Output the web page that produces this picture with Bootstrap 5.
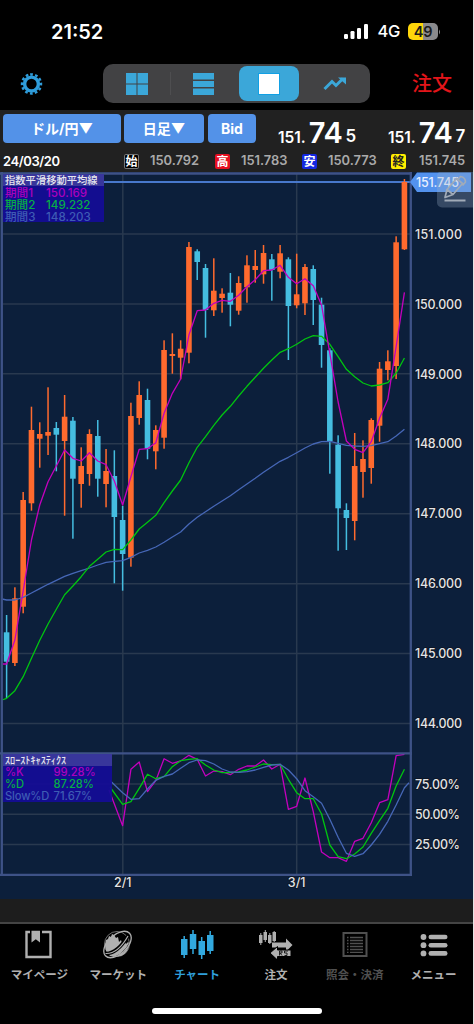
<!DOCTYPE html>
<html lang="ja">
<head>
<meta charset="utf-8">
<meta name="viewport" content="width=device-width, initial-scale=1">
<title>チャート</title>
<link rel="stylesheet" href="https://cdn.jsdelivr.net/npm/bootstrap@5.3.0/dist/css/bootstrap.min.css">
<style>
html,body{height:1024px;overflow:hidden;background:#000}
body{font-family:Inter,"Noto Sans CJK JP",sans-serif;color:#fff;line-height:1}
.phone{width:474px;height:1024px;border-right:1px solid #e4e4e4;overflow:hidden}
.phone svg{display:block;flex:none}
.status{height:64px;padding:22px 32px 0 51px}
.clock{font-size:20px;font-weight:600;letter-spacing:0;line-height:20px}
.net{font-size:16.5px;font-weight:500;letter-spacing:-.3px}
.battery{width:30px;height:17px;border-radius:5px;background:linear-gradient(90deg,#ffd60a 50%,#8a8a8d 50%);color:#1a1a1a;font-size:14.5px;font-weight:600;letter-spacing:-.2px;padding-top:1px}
.toolbar{height:39px;padding:0 20px}
.seg{width:267px;height:39px;border-radius:10px;background:#424244;padding:2px;margin-left:60px}
.seg .cell{width:66px}
.seg .cell:first-child{border-right:1px solid #4b4b4d;border-image:linear-gradient(transparent 20%,#4e4e50 20% 80%,transparent 80%) 1}
.seg .on{background:#3ba7d9;border-radius:8px;width:61px;margin:0 3px 0 2px}
.order{color:#e3151a;font-size:20px;font-weight:500;width:41px;white-space:nowrap}
.quote{height:62px;margin-top:7px;background:#212121;padding-top:4px}
.pick{height:29px;background:#5392e8;border-radius:4px;color:#fff;font-weight:700;font-size:14px;padding:0;border:0;line-height:30px;white-space:nowrap}
.rate{font-weight:600;width:80px;height:31px;white-space:nowrap}
.rate .pre{font-size:15.5px}.rate .big{font-size:29px;letter-spacing:-.3px;line-height:25px;margin-left:3px}.rate .pip{font-size:17px;margin-left:3px}
.ohlc{display:grid;grid-template-columns:120px 26px 65px 26px 61px 26px 63px 28px 55px;height:28px;align-items:center;font-size:12.9px;font-weight:600;color:#aaa;padding-top:5px}
.ohlc .day{font-size:13px;letter-spacing:-.4px;font-weight:600;padding-left:3px}
.tag{width:15px;height:15px;border-radius:2px;font-size:12px;font-weight:700;line-height:15px;text-align:center;overflow:hidden}
.chart{height:727px;background:#0c1f3b}
.axis text{fill:#e2e3e6;font:500 12.5px Inter,sans-serif;stroke:#0c1320;stroke-width:1.5px;paint-order:stroke}
.legend-box{position:absolute;left:3px;background:rgba(20,12,151,.93);font-size:11.6px;line-height:12px;white-space:nowrap;font-weight:500}
.legend-box .cap{background:#38369b;color:#e6e6ee;padding-left:2px;margin-bottom:1px}
.legend-box .ln{height:12px;padding-left:2px}
.legend-box .kanji{font-size:11.2px;letter-spacing:.2px}
.c1{color:#aa00bd}.c2{color:#06af46}.c3{color:#3e5cb4}
.gap-bar{height:25px;background:#1d1d1d;border-bottom:2px solid #444}
.tabs{height:100px;padding-top:5px}
.tab-item{width:79px;color:#b0b0b0;font-size:11.5px;font-weight:600;white-space:nowrap}
.tab-item .cap{margin-top:9px;line-height:14px}
.home{width:170px;height:6px;border-radius:3px;background:#fff;margin:auto auto 10px 152px}
</style>
<script src="https://cdn.jsdelivr.net/npm/bootstrap@5.3.0/dist/js/bootstrap.bundle.min.js"></script>
</head>
<body>
<main class="phone d-flex flex-column">
 <header class="status d-flex justify-content-between align-items-start">
  <span class="clock">21:52</span>
  <div class="d-flex align-items-center" style="height:19px">
   <svg width="25" height="17" viewBox="0 0 25 17" fill="#fff"><rect x="0" y="11" width="4" height="5" rx="1.2"/><rect x="6.500" y="8" width="4" height="8" rx="1.200"/><rect x="13" y="5" width="4" height="11" rx="1.200"/><rect x="20" y="1" width="4" height="15" rx="1.200"/></svg>
   <span class="net ms-2 me-2">4G</span>
   <span class="battery d-flex align-items-center justify-content-center">49</span>
   <svg width="3" height="6"><path d="M1 .5Q3 3 1 5.500z" fill="#8a8a8d"/></svg>
  </div>
 </header>
 <nav class="toolbar d-flex align-items-center">
  <svg width="23" height="24" viewBox="-12 -12 24 24"><circle r="7.200" fill="none" stroke="#2f9ddb" stroke-width="3.600"/><circle r="9.900" fill="none" stroke="#2f9ddb" stroke-width="2.600" stroke-dasharray="2.800 2.384" transform="rotate(-98)"/></svg>
  <div class="seg d-flex align-items-stretch">
   <div class="cell d-flex align-items-center justify-content-center"><svg width="22" height="22" fill="#3ba7d9"><path d="M0 0h10.500v10.500H0zM11.500 0H22v10.500H11.500zM0 11.500h10.500V22H0zM11.500 11.500H22V22H11.500z"/></svg></div>
   <div class="cell d-flex align-items-center justify-content-center"><svg width="22" height="22" fill="#3ba7d9"><path d="M0 0h21v6.500H0zM0 8h21v6H0zM0 15.500h21V22H0z"/></svg></div>
   <div class="cell on d-flex align-items-center justify-content-center"><svg width="22" height="22"><rect x=".5" y=".5" width="21" height="21" fill="#fff" stroke="#12a0e4"/></svg></div>
   <div class="cell d-flex align-items-center justify-content-center"><svg width="24" height="16" viewBox="0 0 24 16" fill="none" stroke="#3ba7d9" stroke-width="3"><path d="M1.500 13 9 5.500l4 4 7-7"/><path d="M15 1.500h8v7z" fill="#3ba7d9" stroke="none"/></svg></div>
  </div>
  <span class="order ms-auto">注文</span>
 </nav>
 <section class="quote">
  <div class="d-flex">
   <button class="pick" style="width:118px;margin-left:3px">ドル/円▼</button>
   <button class="pick" style="width:80px;margin-left:3px">日足▼</button>
   <button class="pick" style="width:48px;margin-left:4px">Bid</button>
   <div class="rate d-flex align-items-end" style="margin-left:22px"><span class="pre">151.</span><span class="big">74</span><span class="pip">5</span></div>
   <div class="rate d-flex align-items-end" style="margin-left:30px"><span class="pre">151.</span><span class="big">74</span><span class="pip">7</span></div>
  </div>
  <div class="ohlc">
   <span class="text-white day">24/03/20</span>
   <span class="ps-1"><i class="tag d-block fst-normal" style="background:#000;box-shadow:0 0 0 1px #777 inset;color:#fff">始</i></span><span class="ps-1">150.792</span>
   <span class="ps-1"><i class="tag d-block fst-normal" style="background:#e60f20;color:#fff">高</i></span><span class="ps-1">151.783</span>
   <span class="ps-1"><i class="tag d-block fst-normal" style="background:#1428e0;color:#fff">安</i></span><span class="ps-1">150.773</span>
   <span class="ps-1"><i class="tag d-block fst-normal" style="background:#ffee00;color:#222">終</i></span><span class="ps-1">151.745</span>
  </div>
 </section>
 <section class="chart position-relative">
  <svg id="plot" width="473" height="727" viewBox="0 172 473 727">
   <g id="grid" stroke="#29394f" stroke-width="1.500"></g>
   <path d="M100 182H411" stroke="#4878cc" stroke-width="2"/>
   <g id="candles"></g><g id="lines" fill="none" stroke-width="1.300" stroke-linejoin="round"></g>
   <path d="M1.800 172V875M410.800 172V876M0 173.500H412M0 753.300H412M0 874.800H412" fill="none" stroke="#3e5287" stroke-width="2.300"/>
   <g id="axis" class="axis"></g>
   <path d="M410 182l7-9.500h54v19.500h-54z" fill="#5392ee"/>
   <text x="416" y="186.500" fill="#e9efff" font-family="Inter,sans-serif" font-size="12.500" font-weight="500" textLength="43">151.745</text>
   <path d="M442 171h31v36.500h-31a5 5 0 0 1-5-5V176a5 5 0 0 1 5-5z" fill="#99abc4" fill-opacity=".3"/>
   <g fill="none" stroke="#a1abb8" stroke-width="1.700" stroke-linejoin="round"><path d="M445 197.500l2-8 9.500-11 6 5-9.500 11zM447 189.500l6 5M458.500 179l2-2.500q5 1 5 5.500l-3 3.500"/><path d="M444.500 200.500h21" stroke-width="2"/></g>
  </svg>
  <div class="legend-box" style="top:2px;width:101px;height:48px">
   <div class="cap" style="font-size:10.300px">指数平滑移動平均線</div>
   <div class="ln c1 d-flex"><span style="width:41px">期間1</span>150.169</div>
   <div class="ln c2 d-flex"><span style="width:41px">期間2</span>149.232</div>
   <div class="ln c3 d-flex"><span style="width:41px">期間3</span>148.203</div>
  </div>
  <div class="legend-box" style="top:582px;width:109px;height:48px;font-size:11.2px">
   <div class="cap" style="font-size:10.200px;margin-bottom:0">ｽﾛｰｽﾄｷｬｽﾃｨｸｽ</div>
   <div class="ln c1 d-flex"><span style="width:48.500px">%K</span>99.28%</div>
   <div class="ln c2 d-flex"><span style="width:48.500px">%D</span>87.28%</div>
   <div class="ln c3 d-flex"><span style="width:48.500px;letter-spacing:-.15px">Slow%D</span>71.67%</div>
  </div>
 </section>
 <div class="gap-bar"></div>
 <nav class="tabs d-flex flex-column">
  <div class="d-flex">
   <div class="tab-item d-flex flex-column align-items-center"><svg width="28" height="30" viewBox="0 0 28 30"><path d="M1.500 3h24v25h-24z" fill="none" stroke="#b0b0b0" stroke-width="2.400"/><path d="M5 0h12v5H5z" fill="#000"/><path d="M6.500 1.800h8.500v11.700l-4.200-3.200-4.300 3.200z" fill="#b0b0b0"/></svg><span class="cap">マイページ</span></div>
   <div class="tab-item d-flex flex-column align-items-center"><svg width="32" height="30" viewBox="0 0 32 30"><circle cx="15" cy="15" r="12.500" fill="none" stroke="#8a8a8a" stroke-width=".8"/><path d="M3 16l1-5 2-1 1-3 2 1 1-3 2 1 2 3 2-1 1 5 2-2 1 3 3-1 1 2 2-2 1 1-3 5-6 6-6 3-4-1-4-5z" fill="#b0b0b0"/><path d="M3.500 24.500Q15 25 26 7" fill="none" stroke="#000" stroke-width="3.600"/><ellipse cx="15.500" cy="15.500" rx="16.500" ry="9.500" transform="rotate(-43 15.500 15.500)" fill="none" stroke="#b0b0b0" stroke-width="1.300"/><path d="M3.500 24.500Q16 25 26 7" fill="none" stroke="#b0b0b0" stroke-width="1.200"/><path d="M15 27.500q9 0 12-10l-5 5.500z" fill="#b0b0b0"/></svg><span class="cap">マーケット</span></div>
   <div class="tab-item d-flex flex-column align-items-center" style="color:#2f9fda"><svg width="34" height="30" viewBox="0 0 34 30" fill="#32a9df"><path d="M1 10h6.500v16H1zM9.800 5h6.500v15H9.800zM18.500 12h6.500v14h-6.500zM27 6h6.500v16H27z"/><path d="M4.200 7v22M13 1v24M21.700 8v22M30.200 2v23" stroke="#32a9df" stroke-width="1.500"/></svg><span class="cap">チャート</span></div>
   <div class="tab-item d-flex flex-column align-items-center"><svg width="34" height="30" viewBox="0 0 34 30" fill="#b0b0b0"><path d="M0 6h3.500v8H0zM4.500 3H8v8H4.500zM9 6h3.500v8H9zM13.500 3H17v9h-3.500z"/><path d="M1.800 4v12M6.300 1v12M10.800 4v11M15.200 2v11" stroke="#b0b0b0"/><path d="M13 13.500h14V9.500l6.500 6.500-6.500 6.500v-4H13z"/><path d="M18.500 17.500v3.500H32v6.500H18.500V31L11 24z" stroke="#000"/><path d="M20.500 26.500V22h2.500v2h-2l2 2.500M25.500 26.500H28V24h-2.500v-2H29" fill="none" stroke="#111" stroke-width=".9"/></svg><span class="cap">注文</span></div>
   <div class="tab-item d-flex flex-column align-items-center" style="color:#505050"><svg width="26" height="30" viewBox="0 0 26 30" fill="none" stroke="#505050"><path d="M1.500 4h23v23h-23z" stroke-width="2"/><path d="M5 8.500h1.500M5 11.500h1.500M5 14.500h1.500M5 17.500h1.500M5 20.500h1.500M5 23.300h1.500M8 8.500h13M8 11.500h13M8 14.500h13M8 17.500h13M8 20.500h13M8 23.300h13" stroke-width="1.300"/></svg><span class="cap">照会・決済</span></div>
   <div class="tab-item d-flex flex-column align-items-center"><svg width="28" height="30" viewBox="0 0 28 30" fill="#b0b0b0"><circle cx="3.500" cy="8" r="2.900"/><circle cx="3.500" cy="16.200" r="2.900"/><circle cx="3.500" cy="24.400" r="2.900"/><rect x="8.500" y="5.700" width="19" height="4.600" rx="2.300"/><rect x="8.500" y="13.900" width="19" height="4.600" rx="2.300"/><rect x="8.500" y="22.100" width="19" height="4.600" rx="2.300"/></svg><span class="cap">メニュー</span></div>
  </div>
  <div class="home"></div>
 </nav>
</main>
<script>
// Each candle: up/down flag, high, body top, body bottom, low
const candles=[[0,615,632.3,661.7,698],[1,587.3,598.3,663,666],[1,492,500,606.7,613.3],[1,406.7,430,503.3,510.7],[1,422.3,434,438.7,467.7],[1,387.3,432,435.7,455],[0,422,428,434.7,471.3],[1,395,416.7,441,515.7],[0,417,420.7,478.7,538.7],[1,447.3,466,484,507.7],[1,429.3,434,474,485.7],[0,420,436,478.7,496.7],[1,449,471,484,507.3],[0,450.3,476,517,583.3],[0,506,520,554,590.7],[1,402.7,416,557.7,566.7],[1,381.3,395,418,424.7],[0,388.7,400,448.7,459.3],[1,425.3,430,451.3,469.3],[1,340.3,350,437.7,448.7],[1,333.3,354,356,373.7],[1,340.3,348.7,357.7,379.3],[1,242,247,352.7,363.3],[0,249.3,251.3,262,280],[0,264,268,310,337.7],[1,258.3,290.7,310.3,316],[1,288.3,293.7,298,312.7],[0,273,292.7,304.7,326.3],[1,276.3,283,310.7,314.7],[1,255.3,265.3,287.3,302.7],[1,250,266,270,282.7],[1,245,253,274.3,283.7],[0,254,259.3,270,300.7],[1,245,253.3,271.7,278.3],[0,257.3,259.3,306,360],[1,253.7,294.3,305.3,308.3],[1,264,267,303.3,315],[0,265.3,269,300,325],[0,297.7,304.7,345,367.7],[0,348.3,350.3,441.3,473.7],[0,435.3,444.7,508.3,550.7],[0,503.3,510,518,550],[1,433,466,521,540.3],[1,440.3,459,472,497.7],[1,418.3,420,468,483.7],[1,362,368.7,425.7,441.7],[1,350.3,361.3,370,380.3],[1,236.3,242.3,366,379],[1,179,182,249.3,250]];
const X=i=>6.6+i*8.288;
document.getElementById('candles').innerHTML=candles.map((c,i)=>{const f=c[0]?'#ff6a2e':'#45bde0',x=X(i);return `<rect x="${x-.75}" y="${c[1]}" width="1.5" height="${c[4]-c[1]}" fill="${f}"/><rect x="${x-2.8}" y="${c[2]}" width="5.6" height="${c[3]-c[2]}" fill="${f}"/>`}).join('');
const line=(color,start,from,ys,end='')=>`<polyline stroke="${color}" points="${start} ${ys.map((y,i)=>X(i+from)+','+y).join(' ')} ${end}"/>`;
const P='#c400bd',G='#00c510',B='#4667b7';
document.getElementById('lines').innerHTML=
line(B,'2,599',0,[600,600,597.3,593,588.7,584.3,580.3,576.3,573.3,570.7,568,565,562.3,561.3,560.7,557.3,553,550.3,547,542.3,537,532,524,517.3,511.7,506.3,501,495.7,489.7,484,478.3,472.3,466.7,461.3,457.3,452.7,448,444,441.7,441.3,443.3,445.3,446,446.3,445.7,443.7,441.7,436,429.3])+
line(G,'2,700',0,[698.3,690.7,676.7,658.3,640.3,624,609.3,594.7,586,576.7,566.3,559.3,552,549.3,549.7,540,529,522.3,515.3,502.7,491,480,462.7,447.3,436.7,425.3,415,406.3,396,386.3,377.3,368.3,360,352.3,348.7,344.3,339,335.7,336.3,344.3,356.7,369.3,376.7,383,386,385,382.7,373.3,358])+
line(P,'2,664',0,[664,640,591,540,505,481.7,466,450,458.3,461,452.7,461,464.7,481,505,476.7,449.3,448.7,442.7,413.3,393.3,379,335,310.7,310,303.3,300.3,301.3,295.3,286.7,279.7,270.7,270,265.3,277.3,283.7,278.7,285.7,305,353.3,402,441,449.3,452.7,441.7,418.3,399.3,346.7,292.3])+
line(P,'109,790',14,[825.7,769.3,762,791.7,780.7,758.7,763.3,761,755.3,759.3,776,771,771.7,774.7,769.3,766,766,760,769,764.3,809.3,806.3,778,811.7,852,857.7,857.7,861.3,841.3,838.3,822.7,802.7,799.7,755.7,754.3])+
line(G,'110,787',14,[804.3,801.7,788.3,774.3,778.7,776.7,766.7,760.7,759.3,758.7,765,770,772.7,772.7,772,770,767,764,764.7,764.3,779.3,792.7,798.7,798.7,814,845,856.7,858.7,854,847,833.3,820.7,808.3,786,769.3])+
line(B,'110,780.5',14,[792.7,799.3,798.7,789,780.3,776.3,774,768.3,762.7,760,760.7,764,769,772,772.3,771.7,770,767.3,765,764.3,770,778.7,790.7,796.7,803.3,819.3,837.3,853.3,856.3,853.7,845,834.3,821.3,805,787.7],'409,782.7');
let grid='<path d="M122.8 174V874M296.7 174V874"/>',axis='';
for(let p=151;p>=144;p--){const y=234+(151-p)*69.93;grid+=`<path d="M3 ${y}H410"/>`;axis+=`<text x="415" y="${y+4.7}" textLength="47">${p}.000</text>`}
[[784,75],[814.2,50],[844.4,25]].forEach(([y,v])=>{grid+=`<path d="M3 ${y}H410"/>`;axis+=`<text x="415" y="${y+4.7}" textLength="45">${v}.00%</text>`});
axis+='<text x="122.8" y="887" text-anchor="middle">2/1</text><text x="296.7" y="887" text-anchor="middle">3/1</text>';
document.getElementById('grid').innerHTML=grid;document.getElementById('axis').innerHTML=axis;
</script>
</body>
</html>
